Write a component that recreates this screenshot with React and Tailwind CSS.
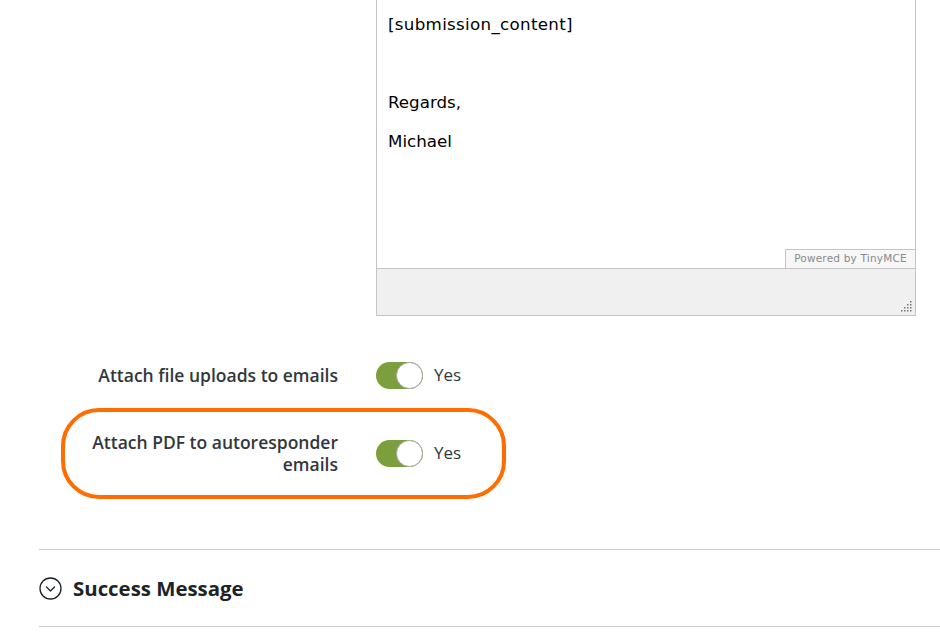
import React from "react";

function Toggle() {
  return (
    <div className="relative w-[47px] h-[27px] rounded-full bg-[#7a9f3c] shrink-0">
      <div className="absolute right-0 top-0 w-[27px] h-[27px] rounded-full bg-white border border-[#a8a8a8]" />
    </div>
  );
}

function ResizeHandle() {
  const dots = [
    [9, 0],
    [9, 3], [6, 3],
    [9, 6], [6, 6], [3, 6],
    [9, 9], [6, 9], [3, 9], [0, 9],
  ];
  return (
    <svg width="11" height="11" viewBox="0 0 11 11">
      {dots.map(([x, y], i) => (
        <rect key={i} x={x} y={y} width="1.5" height="1.5" fill="#777" />
      ))}
    </svg>
  );
}

export default function App() {
  const editorFont = { fontFamily: '"DejaVu Sans", Verdana, sans-serif' };
  return (
    <div
      className="w-[940px] h-[640px] overflow-hidden bg-white text-[#32373c]"
      style={{ fontFamily: '"Open Sans", "Noto Sans", sans-serif' }}
    >
      {/* Editor */}
      <div className="ml-[376px] w-[540px] border border-t-0 border-[#c5c5c5]">
        <div className="relative h-[268px] bg-white pt-[13px] pl-[11px] text-[16.7px] text-black" style={editorFont}>
          <p className="h-[22px] leading-[22px] mb-[17px] tracking-[0.3px]">[submission_content]</p>
          <p className="h-[22px] leading-[22px] mb-[17px]">&nbsp;</p>
          <p className="h-[22px] leading-[22px] mb-[17px]">Regards,</p>
          <p className="h-[22px] leading-[22px] mb-[17px]">Michael</p>
          <div className="absolute right-0 bottom-0 w-[130px] h-[19px] border-l border-t border-[#c5c5c5] bg-[#f7f7f7] flex items-center justify-center text-[10.5px] text-[#8a8a8a] tracking-[0.2px]" style={{ fontFamily: '"DejaVu Sans", sans-serif' }}>
            Powered by TinyMCE
          </div>
        </div>
        <div className="h-[47px] border-t border-[#c5c5c5] bg-[#f0f0f0] flex items-end justify-end pr-[3px] pb-[3px]">
          <ResizeHandle />
        </div>
      </div>

      {/* Row 1 */}
      <div className="mt-[46px] h-[26px] flex items-center">
        <div className="w-[338px] text-right text-[17.5px] font-semibold text-[#32373c] leading-[22px]">
          Attach file uploads to emails
        </div>
        <div className="ml-[38px] flex items-center">
          <Toggle />
          <span className="ml-[11px] text-[17px] text-[#32373c]">Yes</span>
        </div>
      </div>

      {/* Row 2 (highlighted) */}
      <div className="relative mt-[43px] h-[44px] flex items-center">
        <div className="absolute left-[61px] w-[445px] top-[-23px] bottom-[-24px] rounded-[38px] border-4 border-[#ff6c00]" />
        <div className="w-[338px] pl-[70px] text-right text-[17.5px] font-semibold text-[#32373c] leading-[22px]">
          Attach PDF to autoresponder emails
        </div>
        <div className="ml-[38px] flex items-center">
          <Toggle />
          <span className="ml-[11px] text-[17px] text-[#32373c]">Yes</span>
        </div>
      </div>

      {/* Success Message section */}
      <div className="ml-[39px] mt-[74px] border-t border-b border-[#cfcfcf] h-[78px] flex items-center">
        <svg width="23" height="23" viewBox="0 0 23 23" className="shrink-0">
          <circle cx="11.5" cy="11.5" r="10.5" fill="none" stroke="#1d2327" strokeWidth="1.3" />
          <path d="M7.5 10 L11.5 14 L15.5 10" fill="none" stroke="#1d2327" strokeWidth="1.3" strokeLinecap="round" strokeLinejoin="round" />
        </svg>
        <span className="ml-[11px] text-[20.4px] font-bold text-[#1d2327]">Success Message</span>
      </div>
    </div>
  );
}
